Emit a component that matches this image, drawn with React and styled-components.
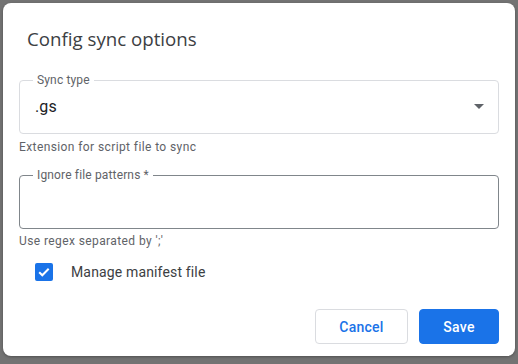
import React, { useState } from 'react';
import styled, { createGlobalStyle } from 'styled-components';

const GlobalStyle = createGlobalStyle`
  html, body {
    margin: 0;
    padding: 0;
    background: #737373;
  }
  body {
    font-family: Roboto, "Liberation Sans", sans-serif;
  }
`;

export default function App() {
  const [manifest, setManifest] = useState(true);

  return (
    <Backdrop>
      <GlobalStyle />
      <Dialog>
        <Title>Config sync options</Title>

        <Field>
          <Legend>Sync type</Legend>
          <FieldRow>
            <Value>.gs</Value>
            <svg width="24" height="24" viewBox="0 0 24 24">
              <path d="M7 10l5 5 5-5z" fill="#5f6368" />
            </svg>
          </FieldRow>
        </Field>
        <Helper>Extension for script file to sync</Helper>

        <Field dark>
          <Legend>Ignore file patterns *</Legend>
          <FieldRow />
        </Field>
        <Helper last>Use regex separated by ';'</Helper>

        <CheckRow onClick={() => setManifest(!manifest)}>
          <CheckBox checked={manifest}>
            {manifest && (
              <svg width="18" height="18" viewBox="0 0 18 18">
                <path d="M4.2 9.2l3.1 3.1 6.4-6.5" fill="none" stroke="#fff" strokeWidth="2" />
              </svg>
            )}
          </CheckBox>
          <CheckLabel>Manage manifest file</CheckLabel>
        </CheckRow>

        <Actions>
          <Button>Cancel</Button>
          <Button primary>Save</Button>
        </Actions>
      </Dialog>
    </Backdrop>
  );
}

const Backdrop = styled.div`
  width: 518px;
  height: 364px;
  box-sizing: border-box;
  padding: 3px 3px 8px 3px;
`;

const Dialog = styled.div`
  width: 512px;
  height: 353px;
  box-sizing: border-box;
  background: #fff;
  border-radius: 8px;
  padding: 0 16px 12px;
  display: flex;
  flex-direction: column;
  box-shadow: 0 1px 3px rgba(0, 0, 0, 0.3);
`;

const Title = styled.div`
  font-family: "Open Sans", Roboto, sans-serif;
  font-size: 18.7px;
  color: #3c4043;
  line-height: 24px;
  padding: 24px 8px 0;
  margin-bottom: 22px;
`;

const Field = styled.fieldset`
  margin: 0;
  padding: 0 15px 8px 15px;
  min-width: 0;
  border: 1px solid ${({ dark }) => (dark ? '#80868b' : '#dadce0')};
  border-radius: 4px;
`;

const Legend = styled.legend`
  font-size: 12px;
  line-height: 14px;
  letter-spacing: 0.15px;
  color: #5f6368;
  padding: 0 4px;
  margin-left: -2px;
`;

const FieldRow = styled.div`
  height: 38px;
  display: flex;
  align-items: center;
  justify-content: space-between;
  margin-right: -8px;
`;

const Value = styled.span`
  font-size: 16px;
  letter-spacing: 0.15px;
  color: #202124;
`;

const Helper = styled.div`
  font-size: 12px;
  line-height: 16px;
  letter-spacing: 0.4px;
  color: #5f6368;
  margin: ${({ last }) => (last ? '4px 0 14px' : '5px 0 13px')};
`;

const CheckRow = styled.label`
  display: flex;
  align-items: center;
  gap: 18px;
  margin-left: 16px;
  cursor: pointer;
`;

const CheckBox = styled.span`
  width: 18px;
  height: 18px;
  border-radius: 2px;
  box-sizing: border-box;
  background: ${({ checked }) => (checked ? '#1a73e8' : '#fff')};
  border: 2px solid ${({ checked }) => (checked ? '#1a73e8' : '#5f6368')};
  display: flex;
  align-items: center;
  justify-content: center;

  svg {
    flex: none;
  }
`;

const CheckLabel = styled.span`
  font-size: 14px;
  letter-spacing: 0.15px;
  color: #3c4043;
`;

const Actions = styled.div`
  margin-top: auto;
  display: flex;
  justify-content: flex-end;
  gap: 11px;
`;

const Button = styled.button`
  font-family: Roboto, "Liberation Sans", sans-serif;
  font-size: 14px;
  font-weight: 500;
  letter-spacing: 0.25px;
  height: 35px;
  border-radius: 4px;
  padding: 0;
  width: ${({ primary }) => (primary ? '80px' : '93px')};
  border: 1px solid ${({ primary }) => (primary ? '#1a73e8' : '#dadce0')};
  background: ${({ primary }) => (primary ? '#1a73e8' : '#fff')};
  color: ${({ primary }) => (primary ? '#fff' : '#1a73e8')};
  cursor: pointer;
`;
